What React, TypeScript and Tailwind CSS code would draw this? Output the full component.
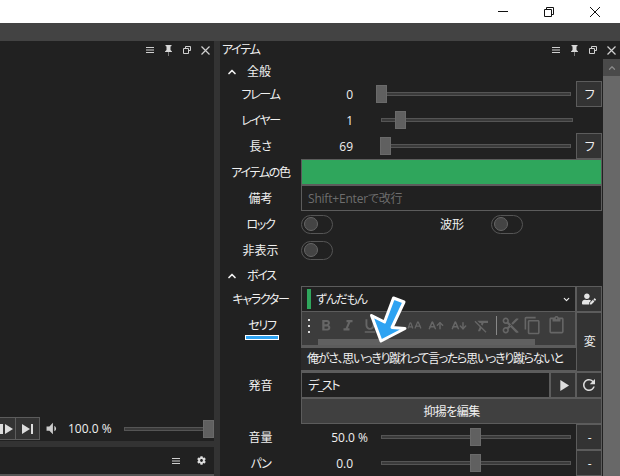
import { ChevronUp, ChevronDown, AArrowUp, AArrowDown, ALargeSmall } from "lucide-react";
import { FaCog, FaUserEdit } from "react-icons/fa";
import {
  MdContentCopy,
  MdContentCut,
  MdContentPaste,
  MdFormatBold,
  MdFormatClear,
  MdFormatItalic,
  MdFormatUnderlined,
  MdPlayArrow,
  MdRefresh,
  MdVolumeDown,
} from "react-icons/md";

function PaneIcons() {
  return (
    <div className="flex items-center text-[#d0d0d0]">
      <svg width="8" height="8" viewBox="0 0 8 8" stroke="currentColor"><path d="M0 1.500h8M0 4h8M0 6.500h8" /></svg>
      <svg className="ml-[11px]" width="7" height="11" viewBox="0 0 7 11"><path d="M.5 0h6v1l-1 .5V5L7 6.500V7H0v-.5L1.500 5V1.500L.5 1z" fill="#d8d8d8" /><path d="M3 7h1v4H3z" fill="#777" /></svg>
      <svg className="ml-[11px]" width="8" height="8" viewBox="0 0 8 8" fill="none" stroke="currentColor"><path d="M2.500 2V.5h5v4H6" /><path d="M.5 2.500h5v5h-5z" /></svg>
      <svg className="ml-[10px]" width="9" height="9" viewBox="0 0 9 9" stroke="currentColor" strokeWidth="1.2"><path d="M.5.5l8 8M8.500.5l-8 8" /></svg>
    </div>
  );
}

function Slider({ pos }: { pos: number }) {
  return (
    <div className="relative flex h-[18px] flex-1 items-center">
      <div className="h-[4px] w-full border border-[#555] bg-[#3a3a3a]" />
      <div className="absolute top-0 h-[18px] w-[11px] border border-[#6a6a6a] bg-[#606060]" style={{ left: pos }} />
    </div>
  );
}

function Label({ children, kanji }: { children: React.ReactNode; kanji?: boolean }) {
  return <div className={kanji ? "w-[81px] shrink-0 pt-[2px] text-center tracking-normal text-[#f0f0f0]" : "w-[81px] shrink-0 pt-[2px] text-center text-[#f0f0f0]"}>{children}</div>;
}

function SliderRow({ label, value, pos, btn, valueClass, wide, kanji }: { label: string; value: string; pos: number; btn?: string; valueClass?: string; wide?: boolean; kanji?: boolean }) {
  return (
    <div className="flex h-[26px] items-center">
      <Label kanji={kanji}>{label}</Label>
      <div className={"w-[72px] shrink-0 whitespace-nowrap pt-[2px] text-right tracking-normal " + (valueClass ?? "pr-[20px]")}>{value}</div>
      <div className={wide ? "-mr-[2px] flex flex-1 pl-[8px]" : "flex flex-1 pl-[8px]"}>
        <Slider pos={pos} />
      </div>
      {btn ? (
        <div className="ml-[5px] flex h-[26px] w-[26px] shrink-0 items-center justify-center border border-[#5c5c5c] bg-[#333] pt-[1px]">{btn}</div>
      ) : (
        <div className="ml-[5px] w-[26px] shrink-0" />
      )}
    </div>
  );
}

function Toggle() {
  return (
    <div className="flex h-[19px] w-[32px] items-center rounded-full border border-[#555] pl-[2px]">
      <div className="h-[14px] w-[14px] rounded-full border border-[#666] bg-[#444]" />
    </div>
  );
}

function Section({ label, first }: { label: string; first?: boolean }) {
  return (
    <div className={first ? "flex h-[22px] items-center pl-[6px] pt-[3px] tracking-normal" : "flex h-[23px] items-center pl-[6px] pt-[3px]"}>
      <ChevronUp size={12} strokeWidth={3.5} className="text-[#eee]" />
      <span className="ml-[9px] text-[#f0f0f0]">{label}</span>
    </div>
  );
}

export default function App() {
  return (
    <div className="relative flex h-[476px] w-[620px] flex-col overflow-hidden bg-[#333] font-['Open_Sans','Noto_Sans_CJK_JP',sans-serif] text-[12px] leading-none tracking-[-1.3px] text-[#f0f0f0] [font-feature-settings:'palt']">
      <div className="flex h-[23px] shrink-0 items-center justify-end bg-white pr-[2px] text-black">
        <div className="flex w-[46px] justify-center">
          <svg width="10" height="1"><path d="M0 .5h10" stroke="#111" /></svg>
        </div>
        <div className="flex w-[46px] justify-center">
          <svg width="10" height="10" viewBox="0 0 10 10" fill="none" stroke="#111"><path d="M2.500 2V.5h7v7H8" /><path d="M.5 2.500h7v7h-7z" /></svg>
        </div>
        <div className="flex w-[46px] justify-center">
          <svg width="10" height="10" viewBox="0 0 10 10" stroke="#111"><path d="M0 0l10 10M10 0L0 10" /></svg>
        </div>
      </div>
      <div className="h-[18px] shrink-0 bg-[#434343]" />
      <div className="flex min-h-0 flex-1">
        {/* 左側 */}
        <div className="flex w-[214px] shrink-0 flex-col">
          <div className="flex h-[400px] flex-col bg-[#212121]">
            <div className="flex h-[18px] items-center justify-end pr-[4px]"><PaneIcons /></div>
            <div className="flex-1" />
            <div className="mb-[1px] flex h-[23px] items-center">
              <div className="flex h-[23px] w-[16px] items-center border border-l-0 border-[#5c5c5c] bg-[#333]">
                <svg width="14" height="10" viewBox="0 0 14 10" fill="#ddd"><path d="M0 0h3v10H0zM5 0l8 5-8 5z" /></svg>
              </div>
              <div className="flex h-[23px] w-[24px] items-center justify-center border border-l-0 border-[#5c5c5c] bg-[#333]">
                <svg width="11" height="10" viewBox="0 0 11 10" fill="#ddd"><path d="M0 0l8 5-8 5zM9 0h2v10H9z" /></svg>
              </div>
              <MdVolumeDown size={17} className="ml-[3px] text-[#ccc]" />
              <span className="ml-[8px] w-[42px] whitespace-nowrap tracking-normal">100.0 %</span>
              <div className="ml-[14px] flex flex-1 pr-[1px]"><Slider pos={79} /></div>
            </div>
          </div>
          <div className="mt-[6px] flex h-[29px] items-center justify-end gap-[17px] border-b-2 border-[#555] bg-[#212121] pr-[8px]">
            <svg width="8" height="8" viewBox="0 0 8 8" stroke="#cfcfcf"><path d="M0 1.500h8M0 4h8M0 6.500h8" /></svg>
            <FaCog size={9} className="text-[#ddd]" />
          </div>
        </div>
        <div className="w-[6px] shrink-0" />
        {/* アイテム */}
        <div className="flex min-w-0 flex-1 flex-col bg-[#212121]">
          <div className="flex h-[18px] shrink-0 items-center justify-between pr-[4px]">
            <span className="pl-[2px]">アイテム</span>
            <PaneIcons />
          </div>
          <div className="flex min-h-0 flex-1">
            <div className="w-[382px] shrink-0">
              <Section label="全般" first />
              <SliderRow label="フレーム" value="0" pos={-5} btn="フ" />
              <SliderRow label="レイヤー" value="1" pos={14} wide />
              <SliderRow label="長さ" value="69" pos={-1} btn="フ" kanji />
              <div className="flex h-[26px] items-center">
                <Label>アイテムの色</Label>
                <div className="h-[26px] flex-1 border border-[#5c5c5c] bg-[#2fa65c]" />
              </div>
              <div className="flex h-[26px] items-center">
                <Label kanji>備考</Label>
                <div className="flex h-[26px] flex-1 items-center border border-[#5c5c5c] pl-[6px] pt-[1px] tracking-[-0.2px] text-[#6e6e6e]">Shift+Enterで改行</div>
              </div>
              <div className="flex h-[26px] items-center">
                <Label>ロック</Label>
                <Toggle />
                <span className="ml-[107px] w-[51px] pt-[2px] tracking-normal">波形</span>
                <Toggle />
              </div>
              <div className="flex h-[26px] items-center">
                <Label kanji>非表示</Label>
                <Toggle />
              </div>
              <Section label="ボイス" />
              <div className="flex h-[26px] items-center">
                <Label>キャラクター</Label>
                <div className="flex h-[26px] flex-1 items-center border border-[#5c5c5c] pl-[5px]">
                  <div className="h-[20px] w-[4px] bg-[#2fa65c]" />
                  <span className="ml-[5px] flex-1 pt-[1px]">ずんだもん</span>
                  <ChevronDown size={9} strokeWidth={3} className="mr-[4px]" />
                </div>
                <div className="flex h-[26px] w-[26px] shrink-0 items-center justify-center border border-[#5c5c5c] bg-[#333]">
                  <FaUserEdit size={14} className="text-[#e5e5e5]" />
                </div>
              </div>
              <div className="flex h-[60px]">
                <div className="w-[81px] shrink-0 pl-[3px] pt-[8px] text-center">
                  <div className="mx-auto w-fit">
                    セリフ
                    <div className="mt-[3px] h-[5px] w-[34px] border border-white bg-[#2ea3f2]" />
                  </div>
                </div>
                <div className="flex min-w-0 flex-1 flex-col">
                  <div className="flex h-[34px] flex-col border border-t-0 border-[#5c5c5c] bg-[#3c3c3c] text-[#666]">
                    <div className="flex h-[27px] items-center pl-[6px]">
                      <div className="flex h-[14px] w-[2px] flex-col justify-between">
                        <span className="h-[2px] bg-[#ddd]" />
                        <span className="h-[2px] bg-[#ddd]" />
                        <span className="h-[2px] bg-[#ddd]" />
                      </div>
                      <MdFormatBold size={18} className="ml-[7px]" />
                      <MdFormatItalic size={18} className="ml-[4px]" />
                      <MdFormatUnderlined size={18} className="ml-[4px]" />
                      <ALargeSmall size={15} className="ml-[28px] -scale-x-100" />
                      <AArrowUp size={16} className="ml-[6px]" strokeWidth={2.200} />
                      <AArrowDown size={16} className="ml-[7px]" strokeWidth={2.200} />
                      <MdFormatClear size={18} className="ml-[6px]" />
                      <div className="ml-[5px] h-[19px] w-px bg-[#888]" />
                      <MdContentCut size={19} className="ml-[4px]" />
                      <MdContentCopy size={19} className="ml-[3px]" />
                      <MdContentPaste size={19} className="ml-[5px]" />
                    </div>
                    <div className="ml-[16px] h-[6px] w-[217px] bg-[#606060]" />
                  </div>
                  <div className="flex h-[26px] items-center overflow-hidden whitespace-nowrap border-y-2 border-[#5c5c5c] bg-[#2a2a2a] pl-[6px]">俺がさ、思いっきり蹴れって言ったら思いっきり蹴らないと</div>
                </div>
                <div className="flex w-[26px] shrink-0 items-center justify-center border border-[#5c5c5c] bg-[#333]">変</div>
              </div>
              <div className="flex h-[26px] items-center">
                <Label kanji>発音</Label>
                <div className="flex h-[26px] flex-1 items-center border border-[#5c5c5c] pl-[6px] pt-[1px]">デ_スト</div>
                <div className="flex h-[26px] w-[26px] shrink-0 items-center justify-center border border-[#5c5c5c] bg-[#333]">
                  <MdPlayArrow size={19} className="text-[#ddd]" />
                </div>
                <div className="flex h-[26px] w-[26px] shrink-0 items-center justify-center border border-[#5c5c5c] bg-[#333]">
                  <MdRefresh size={18} className="text-[#ddd]" />
                </div>
              </div>
              <div className="flex h-[26px] items-center">
                <div className="w-[81px] shrink-0" />
                <div className="flex h-[26px] flex-1 items-center justify-center border border-[#5c5c5c] bg-[#404040] pt-[1px] tracking-[-0.6px]">抑揚を編集</div>
              </div>
              <SliderRow label="音量" value="50.0 %" pos={89} btn="-" valueClass="pr-[5px]" kanji />
              <SliderRow label="パン" value="0.0" pos={89} btn="-" />
            </div>
            <div className="ml-[1px] flex-1 bg-[#686868]">
              <div className="flex h-[17px] items-center justify-center bg-[#4a4a4a]">
                <ChevronUp size={10} strokeWidth={3} className="text-[#888]" />
              </div>
            </div>
          </div>
        </div>
      </div>
      {/* 注釈の矢印 */}
      <svg className="absolute left-[366px] top-[292px]" width="44" height="54" viewBox="0 0 44 54">
        <path d="M5.500 23.500 L18.500 30 L27.500 6 L38 10 L26 35.500 L39 36.500 L15 49 Z" fill="#2ea3f2" stroke="#fff" strokeWidth="3" strokeLinejoin="round" />
      </svg>
    </div>
  );
}
